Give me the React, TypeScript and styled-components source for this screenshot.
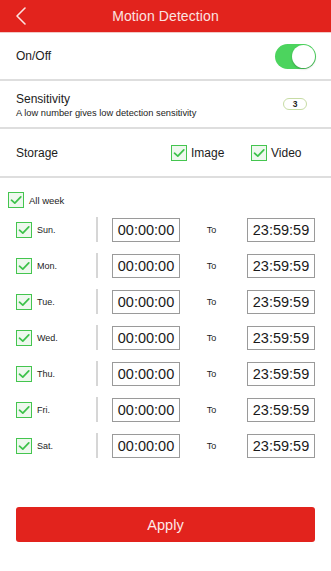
import React from "react";
import styled, { createGlobalStyle } from "styled-components";

const Global = createGlobalStyle`
  html, body { margin: 0; padding: 0; background: #fff; }
  body { font-family: "Liberation Sans", Arial, sans-serif; color: #1c1c1c; }
  * { box-sizing: border-box; }
`;

const Page = styled.div`
  width: 331px;
  height: 571px;
  display: flex;
  flex-direction: column;
  background: #fff;
  overflow: hidden;
`;

const Header = styled.div`
  height: 33px;
  background: #e2231d;
  border-bottom: 1px solid #f2c9c6;
  display: flex;
  align-items: center;
  justify-content: center;
  position: relative;
`;

const BackButton = styled.div`
  position: absolute;
  left: 14px;
  top: 6px;
  width: 16px;
  height: 20px;
  display: flex;
`;

const Title = styled.div`
  font-size: 14px;
  color: #fbe3e1;
  letter-spacing: 0.1px;
`;

const Row = styled.div<{ $h: number }>`
  height: ${(p) => p.$h}px;
  border-bottom: 2px solid #dedede;
  padding: 0 16px;
  display: flex;
  align-items: center;
  justify-content: space-between;
`;

const Label = styled.div`
  font-size: 12px;
  color: #1c1c1c;
`;

const TextCol = styled.div`
  display: flex;
  flex-direction: column;
  gap: 2px;
  padding-top: 1px;
`;

const Sub = styled.div`
  font-size: 9.3px;
  color: #1c1c1c;
`;

const Toggle = styled.div`
  width: 41px;
  height: 25px;
  border-radius: 13px;
  background: #4cd45e;
  position: relative;
  margin-right: -1px;
  &::after {
    content: "";
    position: absolute;
    right: 1px;
    top: 1px;
    width: 23px;
    height: 23px;
    border-radius: 50%;
    background: #fff;
    box-shadow: 0 1px 2px rgba(0, 0, 0, 0.25);
  }
`;

const Badge = styled.div`
  width: 24px;
  height: 12px;
  border: 1px solid #c7dca5;
  border-radius: 6px;
  font-size: 8.5px;
  font-weight: bold;
  display: flex;
  align-items: center;
  justify-content: center;
  margin-right: 8px;
  color: #222;
`;

const Options = styled.div`
  display: flex;
  align-items: center;
  margin-right: 16px;
`;

const Option = styled.div<{ $w?: number }>`
  display: flex;
  align-items: center;
  gap: 4px;
  width: ${(p) => p.$w ?? 0}px;
  font-size: 12px;
`;

const Box = styled.div<{ $size: number }>`
  width: ${(p) => p.$size}px;
  height: ${(p) => p.$size}px;
  border: 1px solid #44c54f;
  background: #eef8ee;
  display: flex;
  align-items: center;
  justify-content: center;
  flex-shrink: 0;
`;

const Check = ({ size = 16 }: { size?: number }) => (
  <Box $size={size}>
    <svg width={size - 4} height={size - 4} viewBox="0 0 12 12">
      <polyline
        points="1.5,6.2 4.8,9.2 10.8,2.8"
        fill="none"
        stroke="#3cc24a"
        strokeWidth="1.7"
        strokeLinecap="round"
        strokeLinejoin="round"
      />
    </svg>
  </Box>
);

const Schedule = styled.div`
  display: flex;
  flex-direction: column;
  padding-top: 14px;
`;

const AllWeek = styled.div`
  display: flex;
  align-items: center;
  gap: 5px;
  padding-left: 8px;
  height: 16px;
  font-size: 9.5px;
  margin-bottom: 9px;
`;

const DayList = styled.div`
  display: flex;
  flex-direction: column;
  gap: 12px;
  padding: 0 16px;
`;

const DayRow = styled.div`
  display: grid;
  grid-template-columns: 80px 2px 14px 68px 67px 68px;
  align-items: center;
  height: 24px;
`;

const DayLabel = styled.div`
  display: flex;
  align-items: center;
  gap: 5px;
  font-size: 9px;
`;

const Divider = styled.div`
  width: 2px;
  height: 25px;
  background: #d6d6d6;
`;

const TimeBox = styled.div`
  height: 24px;
  border: 1px solid #9a9a9a;
  display: flex;
  align-items: center;
  justify-content: center;
  font-size: 14.5px;
  color: #1a1a1a;
`;

const To = styled.div`
  text-align: center;
  font-size: 9px;
  padding-right: 4px;
`;

const Spacer = styled.div`
  flex: 1;
`;

const ApplyButton = styled.div`
  margin: 0 16px 29px;
  height: 35px;
  background: #e2231d;
  border-radius: 3px;
  color: #fde9e8;
  font-size: 14.5px;
  display: flex;
  align-items: center;
  justify-content: center;
`;

const days = ["Sun.", "Mon.", "Tue.", "Wed.", "Thu.", "Fri.", "Sat."];

export default function App() {
  return (
    <Page>
      <Global />
      <Header>
        <BackButton>
          <svg width="16" height="20" viewBox="0 0 16 20">
            <polyline
              points="11,2 3,10 11,18"
              fill="none"
              stroke="#fbe3e1"
              strokeWidth="1.6"
              strokeLinecap="round"
              strokeLinejoin="round"
            />
          </svg>
        </BackButton>
        <Title>Motion Detection</Title>
      </Header>
      <Row $h={48}>
        <Label>On/Off</Label>
        <Toggle />
      </Row>
      <Row $h={48}>
        <TextCol>
          <Label>Sensitivity</Label>
          <Sub>A low number gives low detection sensitivity</Sub>
        </TextCol>
        <Badge>3</Badge>
      </Row>
      <Row $h={49}>
        <Label>Storage</Label>
        <Options>
          <Option $w={80}>
            <Check />
            Image
          </Option>
          <Option $w={48}>
            <Check />
            Video
          </Option>
        </Options>
      </Row>
      <Schedule>
        <AllWeek>
          <Check />
          All week
        </AllWeek>
        <DayList>
          {days.map((d) => (
            <DayRow key={d}>
              <DayLabel>
                <Check />
                {d}
              </DayLabel>
              <Divider />
              <div />
              <TimeBox>00:00:00</TimeBox>
              <To>To</To>
              <TimeBox>23:59:59</TimeBox>
            </DayRow>
          ))}
        </DayList>
      </Schedule>
      <Spacer />
      <ApplyButton>Apply</ApplyButton>
    </Page>
  );
}
